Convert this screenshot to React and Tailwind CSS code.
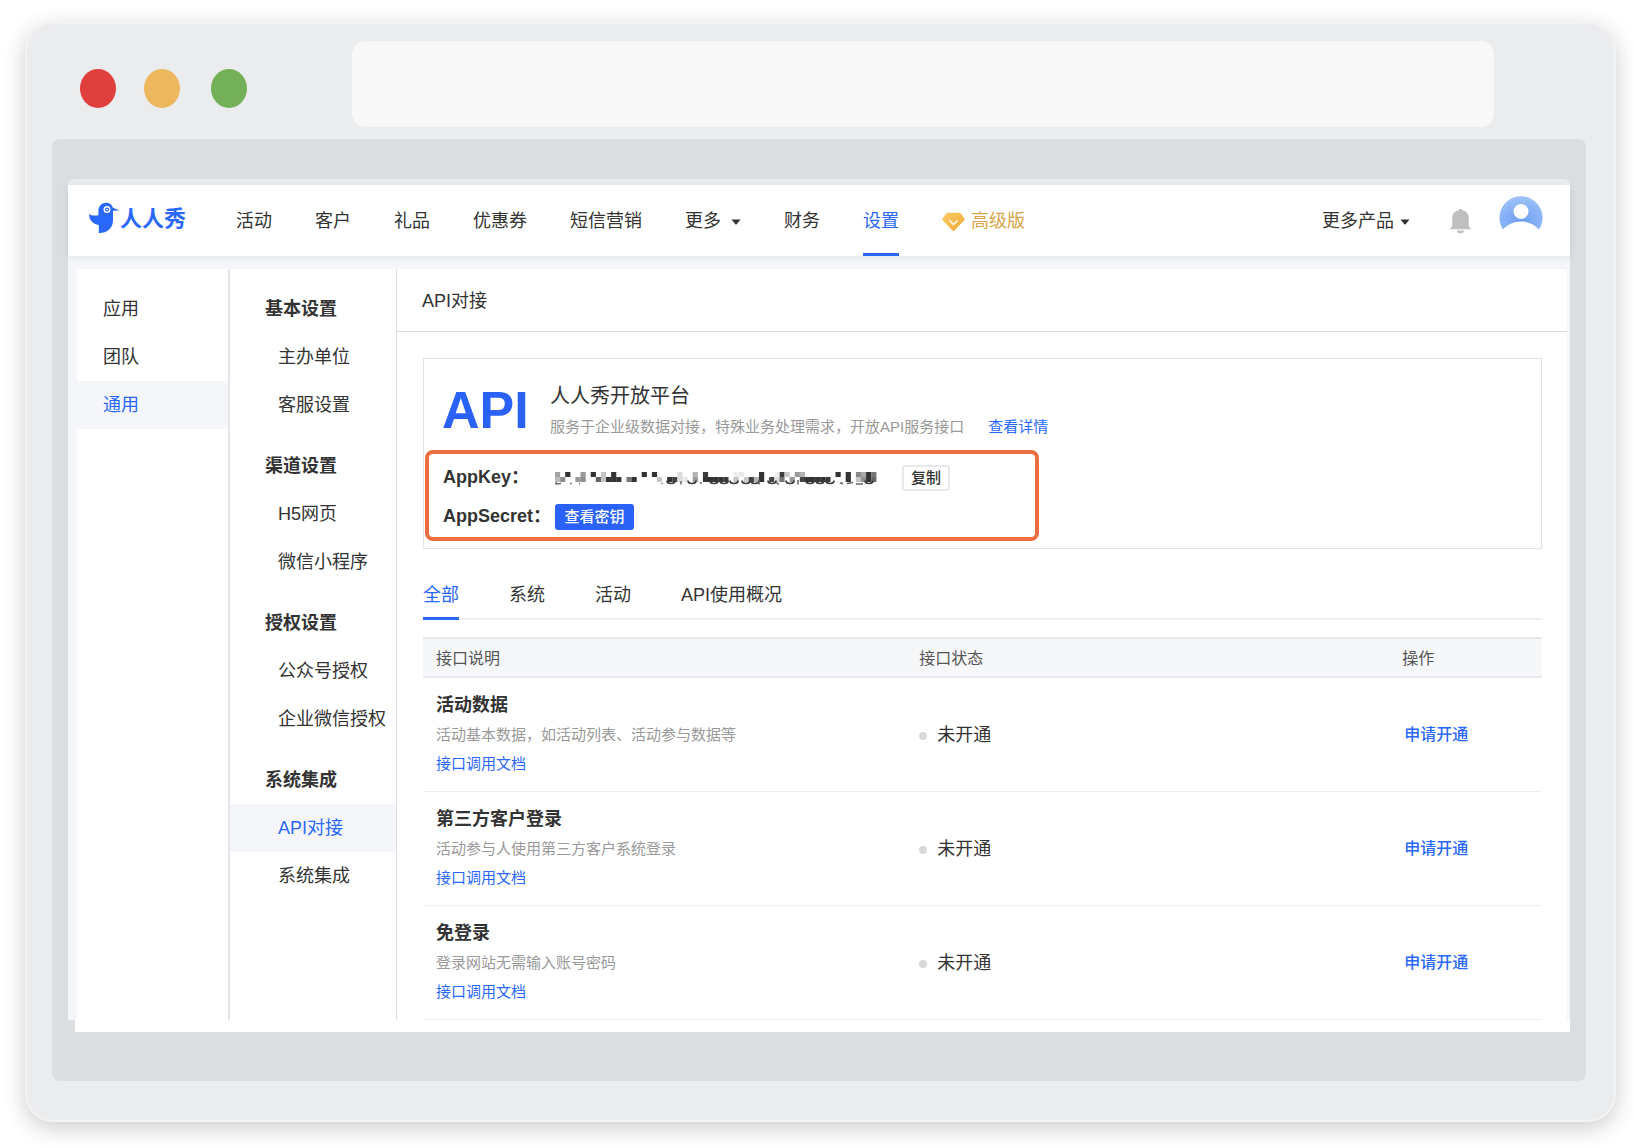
const NAV = ["活动", "客户", "礼品", "优惠券", "短信营销"];

const SIDE_GROUPS = [
  { title: "基本设置", items: ["主办单位", "客服设置"] },
  { title: "渠道设置", items: ["H5网页", "微信小程序"] },
  { title: "授权设置", items: ["公众号授权", "企业微信授权"] },
  { title: "系统集成", items: ["API对接", "系统集成"] },
];

const ROWS = [
  { title: "活动数据", desc: "活动基本数据，如活动列表、活动参与数据等" },
  { title: "第三方客户登录", desc: "活动参与人使用第三方客户系统登录" },
  { title: "免登录", desc: "登录网站无需输入账号密码" },
];

// Mosaic cells of the hidden key: [column, row, shade]
const CELLS = [
  [0, 0, "#a3a3a3"], [2, 0, "#333333"], [5, 0, "#999999"], [7, 0, "#333333"], [9, 0, "#c4c4c4"],
  [11, 0, "#333333"], [17, 0, "#333333"], [19, 0, "#333333"], [24, 0, "#dedede"], [27, 0, "#b5b5b5"],
  [29, 0, "#3d3d3d"], [35, 0, "#eeeeee"], [36, 0, "#e8e8e8"], [40, 0, "#333333"], [44, 0, "#3d3d3d"],
  [43, 0, "#eeeeee"], [45, 0, "#c9c9c9"], [47, 0, "#999999"], [48, 0, "#b0b0b0"], [55, 0, "#333333"],
  [57, 0, "#333333"], [59, 0, "#8a8a8a"], [60, 0, "#a8a8a8"], [61, 0, "#333333"], [62, 0, "#777777"],
  [0, 1, "#bdbdbd"], [1, 1, "#8f8f8f"], [4, 1, "#999999"], [5, 1, "#8f8f8f"], [8, 1, "#666666"],
  [9, 1, "#c4c4c4"], [10, 1, "#333333"], [11, 1, "#333333"], [12, 1, "#333333"], [14, 1, "#7a7a7a"],
  [15, 1, "#333333"], [20, 1, "#c9c9c9"], [22, 1, "#333333"], [23, 1, "#444444"], [24, 1, "#dedede"],
  [25, 1, "#e8e8e8"], [27, 1, "#9c9c9c"], [29, 1, "#333333"], [30, 1, "#333333"], [31, 1, "#333333"],
  [32, 1, "#333333"], [33, 1, "#3a3a3a"], [35, 1, "#c4c4c4"], [37, 1, "#c9c9c9"], [38, 1, "#444444"],
  [39, 1, "#b5b5b5"], [40, 1, "#333333"], [42, 1, "#444444"], [43, 1, "#dddddd"], [44, 1, "#777777"],
  [46, 1, "#999999"], [48, 1, "#444444"], [49, 1, "#333333"], [50, 1, "#333333"], [51, 1, "#333333"],
  [52, 1, "#333333"], [53, 1, "#3a3a3a"], [57, 1, "#333333"], [59, 1, "#c4c4c4"], [60, 1, "#8f8f8f"],
  [61, 1, "#333333"], [62, 1, "#666666"],
];

// Left edges of the rounded glyph bottoms that show below the mosaic
const ARCS = [112, 133, 155, 165, 175, 187, 196, 213, 231, 251, 261, 271, 310];

function HiddenKey() {
  return (
    <svg width="322" height="14" viewBox="0 0 322 14" role="img" aria-label="AppKey" className="shrink-0">
      {CELLS.map(([c, r, f]) => (
        <rect key={c + "-" + r} x={c * 5.1} y={r * 5 + 1} width="5.2" height="5" fill={f} />
      ))}
      {ARCS.map((x) => (
        <path key={x} d={`M${x} 9.500c0 4 8 4 8 0`} fill="none" stroke="#3a3a3a" strokeWidth="1.7" />
      ))}
      <path d="M1 11v2l5-.6M15 12.500h1.500M24 12.500h1M107 12v1M126 10v3.500M146 11v2M204 9v4.500M221 11l3 2.500M243 9v4.500M285 12h2v1.500M292 12.500l6-1M301 13h7" fill="none" stroke="#666" strokeWidth="1.500" />
    </svg>
  );
}

function Bird() {
  return (
    <svg width="31" height="32" viewBox="0 0 31 32" aria-hidden="true" className="mb-[2px] shrink-0">
      <path
        d="M0 12C2.500 14 6.500 13.800 9.400 13.200V9.200C9.400 4 12.800.700 17 .700c3.400 0 6 1.900 7 5l6.600 2.700-6.600.300v9.600C24 26 18.500 31 9.800 31.200v-8.300C4 22.400.200 18.200 0 12Z"
        fill="#2a68fb"
      />
      <circle cx="18" cy="7.600" r="2.800" fill="#2a68fb" stroke="#fff" strokeWidth="1.400" />
      <circle cx="18" cy="7.600" r="0.900" fill="#fff" />
    </svg>
  );
}

function Caret() {
  return (
    <svg width="10" height="6" viewBox="0 0 10 6" aria-hidden="true">
      <path d="M.5.500h9L5.600 5.200q-.6.600-1.200 0Z" fill="#333" />
    </svg>
  );
}

function Diamond() {
  return (
    <svg width="23" height="20" viewBox="0 0 23 20" aria-hidden="true">
      <defs>
        <linearGradient id="gem" x1="0" y1="0" x2="1" y2="1">
          <stop offset="0" stopColor="#f9cd62" />
          <stop offset="1" stopColor="#f4a83a" />
        </linearGradient>
      </defs>
      <path d="M5.500.800h12q.8 0 1.300.6l3.600 5q.7 1-.1 1.900l-9.800 10.300q-1 .9-2 0L.7 8.300q-.8-.9-.1-1.900l3.600-5q.5-.6 1.300-.6Z" fill="url(#gem)" />
      <path d="m7.300 8.300 4.200 4.200 4.200-4.200" fill="none" stroke="#fff" strokeWidth="1.400" />
    </svg>
  );
}

function Bell() {
  return (
    <svg width="21" height="26" viewBox="0 0 21 26" aria-hidden="true">
      <path d="M8.400 2.200a2.200 2.200 0 0 1 4.200 0c3.800 1 6.200 3.800 6.200 7.800v8.200l2 2.200v.8H.2v-.8l2-2.200V10c0-4 2.400-6.800 6.200-7.800ZM6.700 22.400h7.600c-.5 1.900-2 3-3.800 3s-3.300-1.100-3.800-3Z" fill="#bfbfbf" />
    </svg>
  );
}

function Avatar() {
  return (
    <svg width="44" height="35" viewBox="0 0 44 35" aria-hidden="true">
      <defs>
        <radialGradient id="face" cx="0.500" cy="0.750" r="0.750">
          <stop offset="0" stopColor="#6b9df3" />
          <stop offset="1" stopColor="#9fc3f9" />
        </radialGradient>
      </defs>
      <path d="M4 34.500A21.500 21.500 0 1 1 40 34.500C35.500 29.500 29.500 26.500 22 26.500S8.500 29.500 4 34.500Z" fill="url(#face)" />
      <circle cx="22" cy="16.500" r="7.500" fill="#fff" />
    </svg>
  );
}

export default function App() {
  return (
    <div className="min-h-screen bg-white px-[18px] pt-[22px] pb-[26px] pl-[25px] text-[18px] text-[#333333] font-['Liberation_Sans','Noto_Sans_CJK_SC',sans-serif]">
      <div className="rounded-[28px] border-2 border-[#f2f3f5] bg-[#ebecee] pr-7 pb-[39px] pl-[25px] shadow-[0_6px_22px_rgba(0,0,0,0.2)]">
        <div className="flex h-[115px] items-start pt-[17px] pr-[92px]">
          <div className="mt-7 ml-7 flex shrink-0">
            <span className="h-[39px] w-9 rounded-[50%] bg-[#df403e]" />
            <span className="ml-7 h-[39px] w-9 rounded-[50%] bg-[#ecb75d]" />
            <span className="ml-[31px] h-[39px] w-9 rounded-[50%] bg-[#74b057]" />
          </div>
          <div className="ml-[105px] h-[86px] flex-1 rounded-[14px] bg-[#f8f8f8]" />
        </div>

        <div className="rounded-lg bg-[#dadee1] px-4 pt-10 pb-[49px]">
          <div className="rounded-t-md bg-[#e8ecef] pt-[6px]">
            <header className="relative flex h-[71px] items-center bg-white pr-[27px] pl-[21px] shadow-[0_2px_8px_rgba(0,0,0,0.08)]">
              <a href="#" className="-mt-1 flex items-center text-[22px] leading-8 font-bold whitespace-nowrap text-[#2a68fb]">
                <Bird />
                人人秀
              </a>
              <nav className="ml-[50px] flex h-full items-center gap-[43px] whitespace-nowrap">
                {NAV.map((n) => (
                  <a key={n} href="#" className="pt-[2px]">{n}</a>
                ))}
                <button className="flex items-center gap-[10px] pt-[2px]">更多<Caret /></button>
                <a href="#" className="pt-[2px]">财务</a>
                <a href="#" className="flex h-full items-center border-b-[3px] border-[#2a68fb] pt-[5px] text-[#2a68fb]">设置</a>
                <a href="#" className="flex items-center gap-[6px] pt-[2px] text-[#d5a448]"><Diamond />高级版</a>
              </nav>
              <div className="ml-auto flex items-center whitespace-nowrap">
                <button className="flex items-center gap-[6px] pt-[2px]">更多产品<Caret /></button>
                <button aria-label="通知" className="ml-10"><Bell /></button>
                <button aria-label="账户" className="-mt-4 ml-7"><Avatar /></button>
              </div>
            </header>

            <div className="flex min-h-[764px] bg-[#f5f6fa] pt-[13px] pr-[3px] pl-[9px]">
              <aside className="w-[153px] shrink-0 border-r-2 border-[#e4e5ea] bg-white pt-4 leading-[48px]">
                <a href="#" className="block pl-[26px]">应用</a>
                <a href="#" className="block pl-[26px]">团队</a>
                <a href="#" className="block bg-[#f5f6fa] pl-[26px] text-[#2a68fb]">通用</a>
              </aside>
              <aside className="flex w-[167px] shrink-0 flex-col gap-[13px] border-r border-[#dcdde4] bg-white pt-4 leading-[48px] whitespace-nowrap">
                {SIDE_GROUPS.map((g) => (
                  <div key={g.title}>
                    <div className="pl-[35px] font-bold">{g.title}</div>
                    {g.items.map((it) => (
                      <a
                        key={it}
                        href="#"
                        className={it === "API对接" ? "block bg-[#f5f6fa] pl-12 text-[#2a68fb]" : "block pl-12"}
                      >
                        {it}
                      </a>
                    ))}
                  </div>
                ))}
              </aside>

              <main className="min-w-0 flex-1 bg-white">
                <h1 className="flex h-[63px] items-center border-b border-[#dcdde4] pt-[2px] pl-[25px]">API对接</h1>
                <div className="pt-[26px] pr-[25px] pl-[26px]">
                  <section className="h-[191px] border border-[#e1e2ea] pt-[23px]">
                    <div className="flex h-[68px] pl-[18px]">
                      <div className="w-[108px] pt-[3px] text-[52px] leading-[51px] font-bold text-[#2a62f8]">API</div>
                      <div className="whitespace-nowrap">
                        <h2 className="text-[20px] leading-[29px]">人人秀开放平台</h2>
                        <p className="text-[15px] leading-8 text-[#999999]">
                          服务于企业级数据对接，特殊业务处理需求，开放API服务接口
                          <a href="#" className="ml-6 text-[#2a68fb]">查看详情</a>
                        </p>
                      </div>
                    </div>
                    <div className="ml-[1px] h-[91px] w-[614px] max-w-full rounded-lg border-4 border-[#eb6e41] pt-1 pl-[14px] font-bold">
                      <div className="flex h-[39px] items-center">
                        <span className="w-[112px] whitespace-nowrap">AppKey：</span>
                        <HiddenKey />
                        <button className="ml-[25px] h-[26px] w-12 rounded-[3px] border-2 border-[#e8e9ee] text-[15px] leading-5 font-medium">复制</button>
                      </div>
                      <div className="flex h-[39px] items-center">
                        <span className="w-[112px] whitespace-nowrap">AppSecret：</span>
                        <button className="h-[26px] w-[79px] rounded-[3px] bg-[#2a62f8] text-[15px] leading-6 font-medium text-white">查看密钥</button>
                      </div>
                    </div>
                  </section>

                  <div className="mt-[18px] flex h-[53px] gap-[50px] border-b-2 border-[#eeeff5] whitespace-nowrap">
                    <button className="-mb-[2px] border-b-[3px] border-[#2a68fb] pt-[6px] text-[#2a68fb]">全部</button>
                    <button className="pt-[5px]">系统</button>
                    <button className="pt-[5px]">活动</button>
                    <button className="pt-[5px]">API使用概况</button>
                  </div>

                  <table className="mt-[17px] w-full table-fixed border-collapse text-left">
                    <colgroup>
                      <col className="w-[43%]" />
                      <col className="w-[43%]" />
                      <col className="w-[14%]" />
                    </colgroup>
                    <thead>
                      <tr className="h-[39px] border-y-2 border-[#e6e8ec] bg-[#f6f7f9] text-[16px] text-[#555555]">
                        <th className="pt-[2px] pl-[13px] font-normal">接口说明</th>
                        <th className="pt-[2px] pl-[15px] font-normal">接口状态</th>
                        <th className="pt-[2px] pl-[17px] font-normal">操作</th>
                      </tr>
                    </thead>
                    <tbody>
                      {ROWS.map((r) => (
                        <tr key={r.title} className="border-b border-[#eeeff5]">
                          <td className="py-[13px] pl-[13px] leading-[29px]">
                            <div className="font-bold">{r.title}</div>
                            <div className="text-[15px] leading-[29px] text-[#999999]">{r.desc}</div>
                            <a href="#" className="block text-[15px] leading-[29px] text-[#2a68fb]">接口调用文档</a>
                          </td>
                          <td className="pt-[2px] pl-[15px]">
                            <span className="flex items-center gap-[10px]">
                              <span className="size-2 rounded-full bg-[#d9d9d9]" />
                              未开通
                            </span>
                          </td>
                          <td className="pl-[19px]">
                            <button className="text-[16px] font-medium text-[#2a68fb]">申请开通</button>
                          </td>
                        </tr>
                      ))}
                    </tbody>
                  </table>
                </div>
              </main>
            </div>
            <div className="bg-[#dadee1] pl-[7px]"><div className="h-3 bg-white" /></div>
          </div>
        </div>
      </div>
    </div>
  );
}
